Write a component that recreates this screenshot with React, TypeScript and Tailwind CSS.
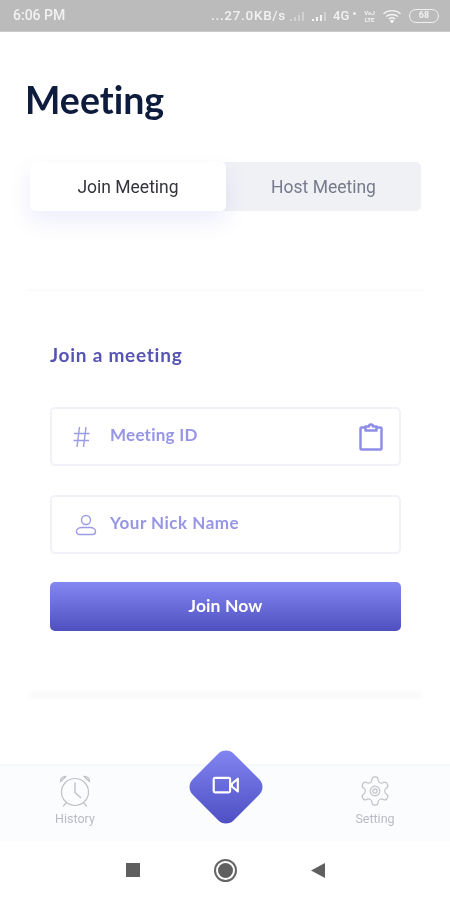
import React from "react";

const StatusBar = () => (
  <div className="h-[32px] shrink-0 bg-[#bbbbbb] border-b border-[#c9c9c9] flex items-center justify-between pl-[13px] pr-[11px] text-[#f2f2f2] font-medium blur-[0.6px] font-['Roboto',sans-serif]">
    <span className="text-[14px]">6:06 PM</span>
    <div className="flex items-center">
      <span className="text-[13.5px] tracking-[0.7px]">...27.0KB/s</span>
      <svg width="17" height="12" viewBox="0 0 17 12" className="ml-[3px] opacity-40">
        <path d="M1 11h2V9H1zM5 11h2V7H5zM9 11h2V5H9zM13 11h2V2h-2z" fill="#f4f4f4" />
      </svg>
      <svg width="18" height="12" viewBox="0 0 18 12" className="ml-[5px]">
        <path d="M1 11h2V9H1zM5 11h2V7H5zM9 11h2V5H9z" fill="#f4f4f4" />
        <path d="M13 11h2V2h-2z" fill="#f4f4f4" opacity="0.4" />
      </svg>
      <span className="ml-[4px] w-[17px] text-[13px]">4G</span>
      <span className="ml-[3px] w-[3px] h-[3px] bg-[#eeeeee] rounded-full self-end mb-[11px]" />
      <span className="ml-[7px] w-[13px] flex flex-col items-center text-[6px] leading-[7px] font-bold">
        <span>VoJ</span>
        <span>LTE</span>
      </span>
      <svg width="20" height="14" viewBox="0 0 18 13" fill="none" stroke="#f4f4f4" strokeWidth="1.3" className="ml-[6px]">
        <path d="M1 4.500C5.500.5 12.500.5 17 4.500" />
        <path d="M3.500 7C6.500 4.400 11.500 4.400 14.500 7" />
        <path d="M6 9.300C7.800 7.900 10.200 7.900 12 9.300" />
        <path d="M9 12.500 7.800 11c.8-.5 1.600-.5 2.400 0z" fill="#f4f4f4" />
      </svg>
      <span className="ml-[7px] w-[30px] h-[14px] rounded-[7px] border border-[#f0f0f0] flex items-center justify-center text-[9px] font-bold">
        68
      </span>
    </div>
  </div>
);

const Tabs = () => (
  <div className="mt-[35px] ml-[30px] mr-[29px] flex h-[49px] rounded-[5px] bg-[#f0f1f5] font-['Roboto',sans-serif] text-[17.5px]">
    <div className="w-[196px] rounded-[5px] bg-white text-[#33343c] flex items-center justify-center pt-[2px] shadow-[0_10px_22px_rgba(100,105,225,0.12)]">
      Join Meeting
    </div>
    <div className="flex-1 text-[#777a8b] flex items-center justify-center pt-[2px]">Host Meeting</div>
  </div>
);

const Field = ({ icon, label, right, layout, spacing }: { icon: React.ReactNode; label: string; right?: React.ReactNode; layout: string; spacing: string }) => (
  <div className={`h-[59px] rounded-[5px] border-2 border-[#f1f1f8] bg-white flex items-center ${layout}`}>
    {icon}
    <span className={`flex-1 pb-[3px] text-[#9695e6] text-[17px] font-bold [font-variant-ligatures:none] font-['Lato',sans-serif] ${spacing}`}>{label}</span>
    {right}
  </div>
);

const Alarm = () => (
  <svg width="34" height="34" viewBox="0 0 34 34" fill="none" stroke="#bfc1c7" strokeWidth="1.2" strokeLinecap="round" strokeLinejoin="round">
    <circle cx="17" cy="18" r="13.500" />
    <path d="M17 9v9.500l5.500 5" strokeWidth="1.400" />
    <path d="M2.500 7.500 8 2.500M31.500 7.500 26 2.500M2.500 7.500C1.500 5 5.500 1.500 8 2.500M31.500 7.500C32.500 5 28.500 1.500 26 2.500" />
    <path d="M8 29l-2.500 3M26 29l2.500 3" />
  </svg>
);

const Gear = () => (
  <svg width="34" height="34" viewBox="0 0 24 24" fill="none" stroke="#bfc1c7" strokeWidth="0.8" strokeLinecap="round" strokeLinejoin="round">
    <path d="M12.220 2h-.44a2 2 0 0 0-2 2v.18a2 2 0 0 1-1 1.730l-.43.250a2 2 0 0 1-2 0l-.15-.080a2 2 0 0 0-2.730.730l-.22.380a2 2 0 0 0 .730 2.730l.15.100a2 2 0 0 1 1 1.720v.510a2 2 0 0 1-1 1.740l-.15.090a2 2 0 0 0-.730 2.730l.22.380a2 2 0 0 0 2.730.730l.15-.080a2 2 0 0 1 2 0l.43.250a2 2 0 0 1 1 1.730V20a2 2 0 0 0 2 2h.44a2 2 0 0 0 2-2v-.18a2 2 0 0 1 1-1.730l.43-.250a2 2 0 0 1 2 0l.15.080a2 2 0 0 0 2.730-.730l.22-.390a2 2 0 0 0-.730-2.730l-.15-.080a2 2 0 0 1-1-1.740v-.500a2 2 0 0 1 1-1.740l.15-.090a2 2 0 0 0 .730-2.730l-.22-.380a2 2 0 0 0-2.730-.730l-.15.080a2 2 0 0 1-2 0l-.43-.250a2 2 0 0 1-1-1.730V4a2 2 0 0 0-2-2z" />
    <circle cx="12" cy="12" r="3.400" />
    <circle cx="12" cy="12" r="1.500" />
  </svg>
);

export default function App() {
  return (
    <div className="relative w-[450px] h-[900px] bg-white flex flex-col overflow-hidden">
      <StatusBar />
      <main className="flex-1 flex flex-col blur-[0.4px]">
        <h1 className="mt-[45px] ml-[25px] h-[50px] leading-[46px] text-[37.5px] font-bold text-[#0d1b3c] [font-variant-ligatures:none] font-['Lato',sans-serif]">
          Meeting
        </h1>
        <Tabs />
        <div className="mt-[78px] mx-[26px] h-[2px] bg-[#fbfbfc]" />
        <section className="ml-[50px] mr-[49px] mt-[50px] flex flex-col">
          <h2 className="h-[26px] leading-[27px] text-[19px] font-bold tracking-[0.75px] [font-variant-ligatures:none] text-[#5554b5] font-['Lato',sans-serif]">Join a meeting</h2>
          <div className="mt-[40px] flex flex-col gap-[29px]">
            <Field
              layout="pl-[21px] pr-[16px] gap-[20px]"
              spacing="tracking-[0.25px]"
              label="Meeting ID"
              icon={
                <svg width="17" height="22" viewBox="0 0 17 22" fill="none" stroke="#9c9be6" strokeWidth="1.400">
                  <path d="M6.500 1 4 21M13 1l-2.500 20M1 7.500h15.500M.5 14.500H16" />
                </svg>
              }
              right={
                <svg width="24" height="28" viewBox="0 0 24 28" fill="none" stroke="#8f8ee6" strokeWidth="2.500" strokeLinejoin="round">
                  <path d="M6 4.500H2.500a1 1 0 0 0-1 1v20a1 1 0 0 0 1 1h19a1 1 0 0 0 1-1v-20a1 1 0 0 0-1-1H18" />
                  <path d="M6.500 3.500H10a2 2 0 0 1 4 0h3.500V7.500h-11z" />
                </svg>
              }
            />
            <Field
              layout="pl-[23px] gap-[13px]"
              spacing="tracking-[0.5px]"
              label="Your Nick Name"
              icon={
                <svg width="22" height="22" viewBox="0 0 22 22" fill="none" stroke="#9c9be6" strokeWidth="1.400">
                  <circle cx="11" cy="6" r="4.500" />
                  <path d="M7 13.500h8a5.500 3.700 0 0 1 5.500 3.700v.6a2.700 2.700 0 0 1-2.700 2.700H4.200a2.700 2.700 0 0 1-2.700-2.700v-.6A5.500 3.700 0 0 1 7 13.500z" />
                </svg>
              }
            />
          </div>
          <button className="mt-[28px] h-[49px] rounded-[5px] bg-gradient-to-b from-[#8587f3] to-[#4f50bf] text-white text-[17.5px] font-bold tracking-[0.1px] font-['Lato',sans-serif]">
            Join Now
          </button>
        </section>
        <div className="mt-[60px] mx-[28px] h-[8px] bg-[#fafafb] rounded-full blur-[1px]" />
      </main>
      <nav className="h-[77px] shrink-0 bg-[#fbfcfe] border-t-2 border-[#f7f8fa] flex justify-between pl-[55px] pr-[55px] pt-[8px] font-['Roboto',sans-serif] text-[12.5px] text-[#b9bbc4] blur-[0.4px]">
        <div className="flex flex-col items-center w-[40px]">
          <Alarm />
          <span className="mt-[2px]">History</span>
        </div>
        <div className="flex flex-col items-center w-[40px]">
          <Gear />
          <span className="mt-[2px]">Setting</span>
        </div>
      </nav>
      <div className="h-[59px] shrink-0 bg-white flex items-center justify-center gap-[74px] pb-[1px] blur-[0.3px]">
        <span className="w-[14px] h-[14px] bg-[#5f5f5f]" />
        <span className="w-[23px] h-[23px] rounded-full border-2 border-[#666666] flex items-center justify-center">
          <span className="w-[15px] h-[15px] rounded-full bg-[#5f5f5f]" />
        </span>
        <svg width="14" height="15" viewBox="0 0 15 16">
          <path d="M15 0v16L0 8z" fill="#5f5f5f" />
        </svg>
      </div>
      <div className="absolute left-[196.500px] top-[758px] w-[58px] h-[58px] rotate-45 rounded-[11px] bg-gradient-to-br from-[#8587f3] to-[#4b4cc0] flex items-center justify-center">
        <svg width="28" height="20" viewBox="0 0 30 22" fill="none" stroke="#ffffff" strokeWidth="2.400" strokeLinejoin="round" className="-rotate-45 -translate-x-[1px] -translate-y-[1px]">
          <rect x="1.500" y="2.500" width="18" height="16" rx="1.500" />
          <path d="M21.500 9 28 3.500v14L21.500 12z" />
        </svg>
      </div>
    </div>
  );
}
